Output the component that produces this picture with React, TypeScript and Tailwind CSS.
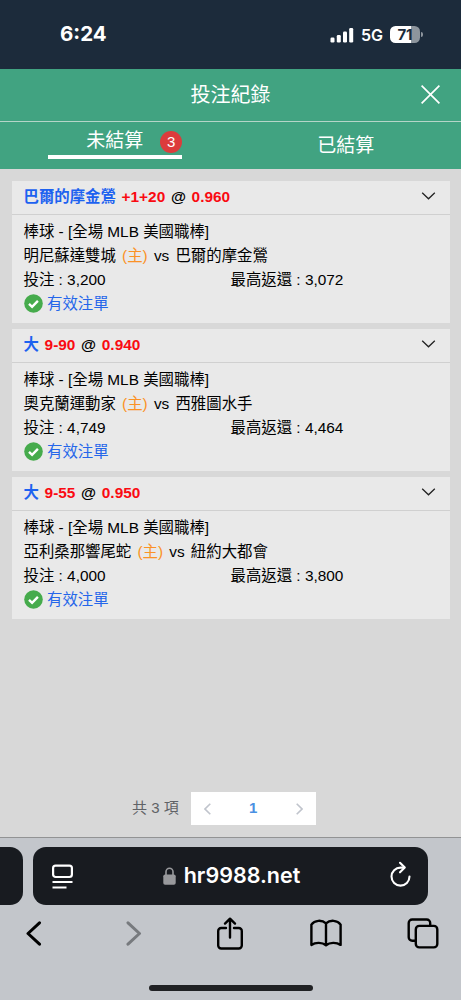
const bets = [
  {
    pick: "巴爾的摩金鶯",
    line: "+1+20",
    odds: "0.960",
    home: "明尼蘇達雙城",
    away: "巴爾的摩金鶯",
    stake: "3,200",
    payout: "3,072",
  },
  {
    pick: "大",
    line: "9-90",
    odds: "0.940",
    home: "奧克蘭運動家",
    away: "西雅圖水手",
    stake: "4,749",
    payout: "4,464",
  },
  {
    pick: "大",
    line: "9-55",
    odds: "0.950",
    home: "亞利桑那響尾蛇",
    away: "紐約大都會",
    stake: "4,000",
    payout: "3,800",
  },
];

export default function App() {
  return (
    <div className="flex h-[1000px] w-[461px] flex-col overflow-hidden bg-[#d8d8d8] font-['Liberation_Sans','Noto_Sans_CJK_TC',sans-serif] text-black">
      <StatusBar />
      <Header />
      <Tabs />
      <main className="flex flex-1 flex-col pr-[11.5px] pl-3 pt-[11.5px]">
        <div className="flex flex-col gap-[6px]">
          {bets.map((bet) => (
            <BetCard key={bet.odds} bet={bet} />
          ))}
        </div>
        <Pagination />
      </main>
      <Browser />
    </div>
  );
}

function StatusBar() {
  return (
    <div className="flex h-[69px] shrink-0 items-center justify-between bg-[#1c2b3b] pr-[38px] pl-[60px] font-['Inter',sans-serif] text-white">
      <span className="text-[20.5px] font-bold leading-none">6:24</span>
      <div className="flex items-center">
        <svg width="24" height="16" viewBox="0 0 24 16" fill="currentColor">
          <rect x="0.5" y="10.5" width="4" height="5" rx="1.2" />
          <rect x="6.8" y="8" width="4" height="7.5" rx="1.2" />
          <rect x="13" y="4.5" width="4" height="11" rx="1.2" />
          <rect x="19.2" y="1" width="4" height="14.5" rx="1.2" />
        </svg>
        <span className="ml-[7px] text-[16px] font-semibold leading-none">5G</span>
        <div className="ml-[7px] flex h-[17px] w-[30px] items-center justify-center rounded-[5.5px] bg-linear-to-r from-white from-70% to-[#8d959d] to-70% text-[15px] font-bold leading-none text-[#1c2b3b]">
          71
        </div>
        <div className="ml-px h-[5px] w-[2px] rounded-r-full bg-[#8d959d]" />
      </div>
    </div>
  );
}

function Header() {
  return (
    <header className="relative flex h-[53px] shrink-0 items-center justify-center border-b border-[#b5d5c8] bg-[#41a381] text-white">
      <h1 className="text-[20px] leading-none">投注紀錄</h1>
      <svg
        className="absolute top-[16px] right-[21px]"
        width="19"
        height="19"
        viewBox="0 0 19 19"
        fill="none"
        stroke="currentColor"
        strokeWidth="1.7"
      >
        <path d="M0.6 0.6l17.8 17.8M18.4 0.6L0.6 18.4" />
      </svg>
    </header>
  );
}

function Tabs() {
  return (
    <nav className="grid h-[47px] shrink-0 grid-cols-2 bg-[#41a381] text-[19px] leading-none text-white">
      <div className="flex justify-center">
        <div className="flex h-[37px] w-[134px] items-center justify-end gap-[17px] border-b-4 border-white pt-[4px]">
          <span>未結算</span>
          <span className="mt-0.5 flex size-[22px] items-center justify-center rounded-full bg-[#dc3c3c] text-[15px]">
            3
          </span>
        </div>
      </div>
      <div className="flex h-[46px] items-center justify-center">已結算</div>
    </nav>
  );
}

function BetCard({ bet }: { bet: (typeof bets)[number] }) {
  return (
    <section className="h-[142px] bg-[#e9e9e9] text-[15.4px]">
      <div className="flex h-[34px] items-center justify-between border-b border-[#d0d0d0] pr-[14px] pl-[11.5px] font-bold">
        <div className="flex gap-[5.7px] leading-6">
          <span className="text-[#1d62f0]">{bet.pick}</span>
          <span className="text-[#fa0a12]">{bet.line}</span>
          <span>@</span>
          <span className="text-[#fa0a12]">{bet.odds}</span>
        </div>
        <svg
          className="mb-[3px]"
          width="15"
          height="8"
          viewBox="0 0 15 8"
          fill="none"
          stroke="#222"
          strokeWidth="1.3"
        >
          <path d="M1.2 0.8l6.3 6 6.3-6" />
        </svg>
      </div>
      <div className="pr-3 pl-[11.5px] pt-[5px] leading-6">
        <p>棒球 - [全場 MLB 美國職棒]</p>
        <p className="flex gap-[6.2px]">
          <span>{bet.home}</span>
          <span className="text-[#fb9226]">(主)</span>
          <span>vs</span>
          <span>{bet.away}</span>
        </p>
        <div className="grid grid-cols-2">
          <span>投注 : {bet.stake}</span>
          <span>最高返還 : {bet.payout}</span>
        </div>
        <p className="flex items-center gap-[4.5px] text-[#2566ea]">
          <svg width="19" height="19" viewBox="0 0 19 19">
            <circle cx="9.5" cy="9.5" r="9.3" fill="#46ab4c" />
            <path
              d="M5 9.8l3.1 3 5.8-6"
              fill="none"
              stroke="white"
              strokeWidth="2.4"
            />
          </svg>
          有效注單
        </p>
      </div>
    </section>
  );
}

function Pagination() {
  return (
    <div className="mt-auto mb-[12px] ml-[120px] flex items-center gap-[12px] text-[15px] text-[#606266]">
      <span>共 3 項</span>
      <div className="flex h-[33px] w-[125px] items-center justify-between bg-white px-[13px]">
        <svg width="7" height="12" viewBox="0 0 7 12" fill="none" stroke="#c0c4cc" strokeWidth="1.6">
          <path d="M6.3 0.7L1 6l5.3 5.3" />
        </svg>
        <span className="font-bold text-[#4a90e2]">1</span>
        <svg width="7" height="12" viewBox="0 0 7 12" fill="none" stroke="#c0c4cc" strokeWidth="1.6">
          <path d="M0.7 0.7L6 6l-5.3 5.3" />
        </svg>
      </div>
    </div>
  );
}

function Browser() {
  return (
    <footer className="flex h-[163px] shrink-0 flex-col border-t border-[#929394] bg-[#c3c6cb]">
      <div className="mt-[9px] flex h-[58px] gap-[10px] text-white">
        <div className="w-[23px] rounded-r-[13px] bg-[#181b20]" />
        <div className="flex w-[395px] items-center justify-between rounded-[13px] bg-[#181b20] pr-[17px] pl-[19px]">
          <svg width="21" height="25" viewBox="0 0 21 25" fill="none" stroke="currentColor" strokeWidth="2.2">
            <rect x="1.1" y="1.6" width="18.8" height="11.4" rx="2.5" />
            <path d="M0.5 18h20M0.5 23.4h14" strokeWidth="2" />
          </svg>
          <div className="flex items-center gap-[8px]">
            <svg width="13" height="18" viewBox="0 0 13 18">
              <rect x="0.3" y="7.5" width="12.4" height="10.3" rx="1.8" fill="#98999c" />
              <path d="M3 8V4.7a3.5 3.5 0 0 1 7 0V8" fill="none" stroke="#98999c" strokeWidth="1.6" />
            </svg>
            <span className="font-['Inter',sans-serif] text-[21.5px] font-semibold leading-none">
              hr9988.net
            </span>
          </div>
          <svg
            className="mb-[5px]"
            width="21"
            height="26"
            viewBox="0 0 21 26"
            fill="none"
            stroke="currentColor"
            strokeWidth="2.1"
            strokeLinecap="round"
            strokeLinejoin="round"
          >
            <path d="M14 6.6h-3.5A9 9 0 1 0 19.5 15.6" />
            <path d="M10 1.8l4.8 4.8-4.8 4.7" />
          </svg>
        </div>
      </div>
      <div className="flex h-[58px] items-center justify-between pr-[21px] pb-[2px] pl-[17px]">
        <div className="flex w-[34px] justify-center">
          <svg width="16" height="25" viewBox="0 0 16 25" fill="none" stroke="black" strokeWidth="3" strokeLinecap="round" strokeLinejoin="round">
            <path d="M13.5 1.8L2 12.5l11.5 10.7" />
          </svg>
        </div>
        <div className="flex w-[34px] justify-center pl-[6px]">
          <svg width="16" height="25" viewBox="0 0 16 25" fill="none" stroke="#777a7e" strokeWidth="3" strokeLinecap="round" strokeLinejoin="round">
            <path d="M2 1.8l11.5 10.7L2 23.2" />
          </svg>
        </div>
        <div className="flex w-[34px] justify-center pl-[2px]">
          <svg width="28" height="33" viewBox="0 0 28 33" fill="none" stroke="black" strokeWidth="2.4" strokeLinecap="round" strokeLinejoin="round">
            <path d="M10 11H5.200a3 3 0 0 0-3 3v14.500a3 3 0 0 0 3 3h17.600a3 3 0 0 0 3-3V14a3 3 0 0 0-3-3H18" />
            <path d="M14 20.500V1.800M9 6.600l5-4.900 5 4.900" />
          </svg>
        </div>
        <svg width="34" height="28" viewBox="0 0 34 28" fill="none" stroke="black" strokeWidth="2.4" strokeLinejoin="round">
          <path d="M17 26.300c-3.800-3.200-10.500-3.200-14.600-.4V5.600C5.600 0.900 13 0.700 17 4.400c4-3.700 11.400-3.500 14.600 1.200v20.300c-4.100-2.800-10.800-2.800-14.600.4zM17 4.400v21.500" />
        </svg>
        <div className="flex w-[34px] justify-center">
          <svg width="32" height="31" viewBox="0 0 32 31" fill="none" stroke="black" strokeWidth="2.4">
            <path d="M8.600 22.800H5.200a3.500 3.500 0 0 1-3.500-3.500V5a3.500 3.500 0 0 1 3.500-3.500h14.500A3.500 3.500 0 0 1 23.200 5v2.600" />
            <rect x="8.800" y="7.900" width="21.500" height="21.500" rx="3.500" />
          </svg>
        </div>
      </div>
      <div className="mt-[22px] ml-[149px] h-[6px] w-[164px] rounded-full bg-[#202124]" />
    </footer>
  );
}
